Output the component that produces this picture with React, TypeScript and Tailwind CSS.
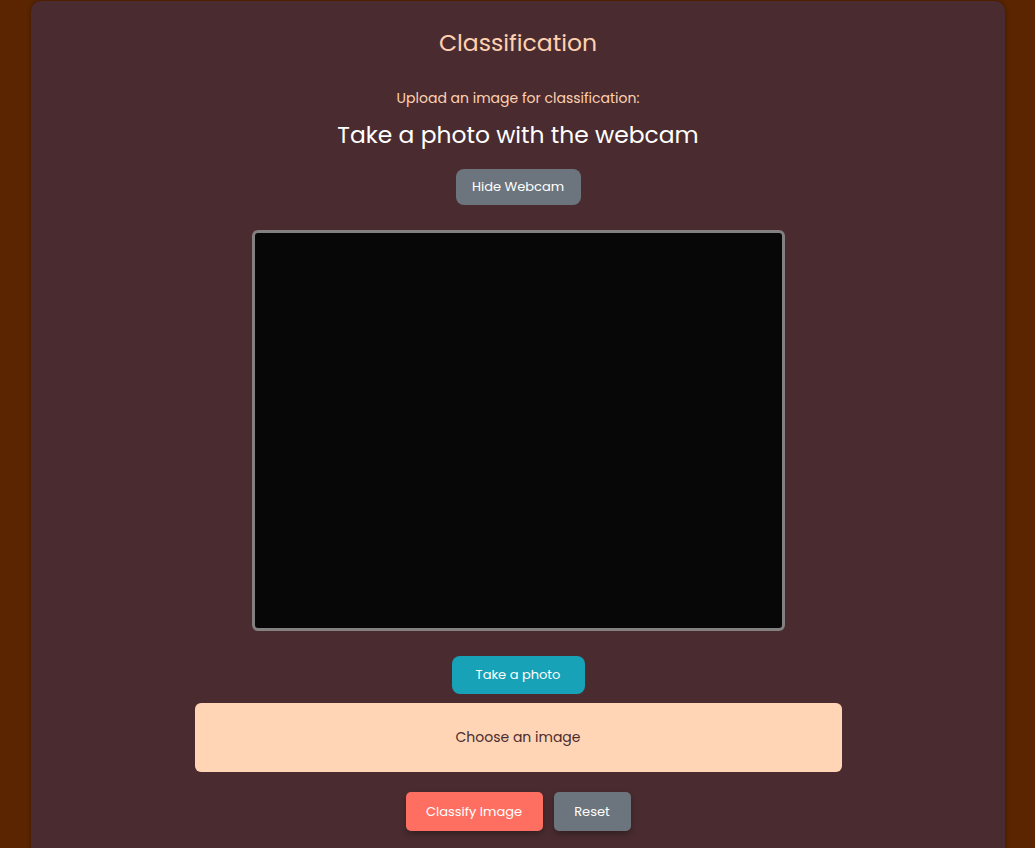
import React from "react";

const FONT = { fontFamily: "Poppins, 'Noto Sans', Lato, sans-serif" };

export default function App() {
  return (
    <div className="h-[848px] overflow-hidden bg-[#5a2500] px-[31px] pt-[1px]" style={FONT}>
      <div className="mx-auto flex min-h-[900px] w-[974px] flex-col items-center rounded-[10px] bg-[#4a2c30] pt-[26px] shadow-[0_0_4px_rgba(0,0,0,0.35)]">
        <h1 className="text-[23.5px] font-normal leading-[32px] text-[#ffd1b0]">Classification</h1>

        <p className="mt-[29px] text-[14px] leading-[20px] text-[#ffd1b0]">Upload an image for classification:</p>

        <h2 className="mt-[11px] text-[23.4px] font-normal leading-[32px] text-white">Take a photo with the webcam</h2>

        <button className="mt-[18px] h-[36px] w-[125px] rounded-[8px] bg-[#6c757d] text-[13px] text-white">
          Hide Webcam
        </button>

        {/* webcam feed */}
        <div className="mt-[25px] h-[401px] w-[533px] rounded-[6px] border-[3px] border-[#828080] bg-[#070707]" />

        <button className="mt-[25px] h-[38px] w-[133px] rounded-[8px] bg-[#17a2b8] text-[13px] text-white">
          Take a photo
        </button>

        <div className="mt-[9px] flex h-[69px] w-[647px] items-center justify-center rounded-[6px] bg-[#ffd5b5] text-[14px] text-[#4a2c30]">
          Choose an image
        </div>

        <div className="mt-[20px] flex gap-[11px]">
          <button className="h-[39px] w-[137px] rounded-[5px] bg-[#ff6f61] text-[13px] text-white shadow-[0_3px_6px_rgba(0,0,0,0.3)]">
            Classify Image
          </button>
          <button className="h-[39px] w-[77px] rounded-[5px] bg-[#6c757d] text-[13px] text-white shadow-[0_3px_6px_rgba(0,0,0,0.3)]">
            Reset
          </button>
        </div>
      </div>
    </div>
  );
}
